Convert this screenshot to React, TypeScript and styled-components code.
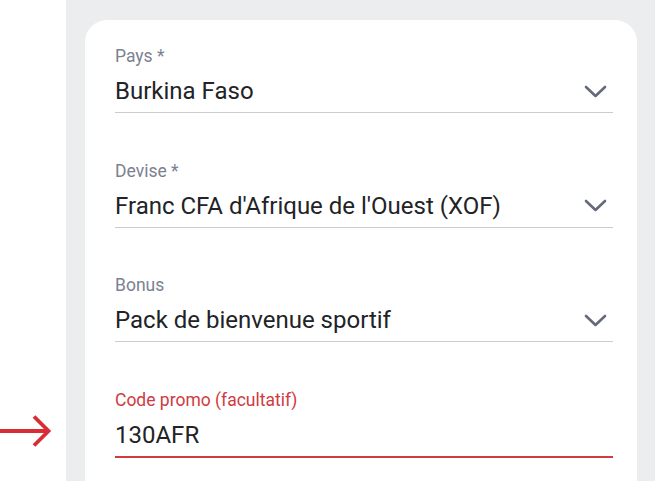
import React from 'react'
import styled, { createGlobalStyle } from 'styled-components'

const GlobalStyle = createGlobalStyle`
  html, body {
    margin: 0;
    padding: 0;
    background: #ffffff;
    font-family: Roboto, "Liberation Sans", sans-serif;
  }
  #root {
    height: 100vh;
  }
`

interface FieldData {
  label: string
  value: string
  select?: boolean
  active?: boolean
}

const fields: FieldData[] = [
  { label: 'Pays *', value: 'Burkina Faso', select: true },
  { label: 'Devise *', value: "Franc CFA d'Afrique de l'Ouest (XOF)", select: true },
  { label: 'Bonus', value: 'Pack de bienvenue sportif', select: true },
  { label: 'Code promo (facultatif)', value: '130AFR', active: true },
]

const Chevron = () => (
  <svg width="23" height="13" viewBox="0 0 23 13" fill="none">
    <path d="M2 2 L11.5 11 L21 2" stroke="#646a7a" strokeWidth="2.6" strokeLinecap="round" strokeLinejoin="round" />
  </svg>
)

const Arrow = () => (
  <svg width="52" height="34" viewBox="0 0 52 34" fill="none">
    <path d="M0 17 H48" stroke="#d92d35" strokeWidth="3.8" />
    <path d="M34 2.5 L48.5 17 L34 31.5" stroke="#d92d35" strokeWidth="3.8" strokeLinejoin="miter" />
  </svg>
)

const App: React.FC = () => {
  return (
    <>
      <GlobalStyle />
      <Page>
        <Gutter>
          <ArrowSlot>
            <Arrow />
          </ArrowSlot>
        </Gutter>
        <Panel>
          <Card>
            {fields.map((f) => (
              <Field key={f.label}>
                <Label $active={f.active}>{f.label}</Label>
                <InputRow $active={f.active}>
                  <Value>{f.value}</Value>
                  {f.select && (
                    <IconSlot>
                      <Chevron />
                    </IconSlot>
                  )}
                </InputRow>
              </Field>
            ))}
          </Card>
        </Panel>
      </Page>
    </>
  )
}

export default App

const Page = styled.div`
  display: flex;
  height: 100%;
  overflow: hidden;
`

const Gutter = styled.div`
  width: 66px;
  flex-shrink: 0;
  position: relative;
`

const ArrowSlot = styled.div`
  position: absolute;
  left: 0;
  top: 414px;
  line-height: 0;
`

const Panel = styled.div`
  flex: 1;
  background: #ebedef;
  padding: 20px 18px 0 19px;
  display: flex;
`

const Card = styled.div`
  flex: 1;
  background: #ffffff;
  border-radius: 22px 22px 0 0;
  padding: 26px 24px 0 30px;
  display: flex;
  flex-direction: column;
  gap: 47.5px;
`

const Field = styled.div`
  display: flex;
  flex-direction: column;
`

const Label = styled.div<{ $active?: boolean }>`
  font-size: 17.5px;
  line-height: 20px;
  color: ${({ $active }) => ($active ? '#cf3b41' : '#7b8191')};
  margin-bottom: 11px;
`

const InputRow = styled.div<{ $active?: boolean }>`
  display: flex;
  align-items: center;
  justify-content: space-between;
  padding-bottom: 7px;
  border-bottom: ${({ $active }) => ($active ? '2.5px solid #cf3b41' : '1.5px solid #c9ccd1')};
`

const Value = styled.div`
  font-size: 24px;
  line-height: 28px;
  color: #222326;
`

const IconSlot = styled.div`
  margin-right: 6px;
  line-height: 0;
`
